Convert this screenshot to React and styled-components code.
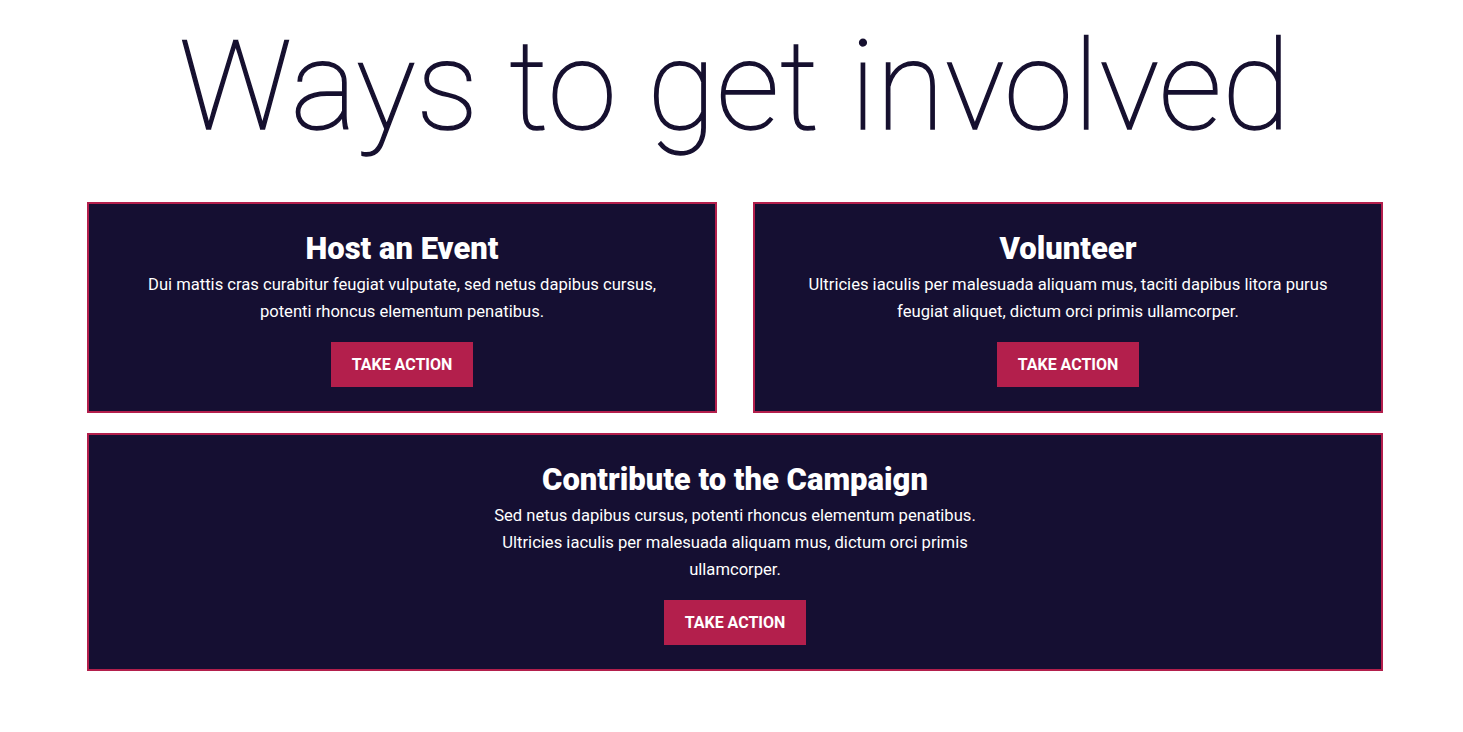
import React from 'react';
import styled, { createGlobalStyle } from 'styled-components';

const GlobalStyle = createGlobalStyle`
  body {
    margin: 0;
    background: #ffffff;
    font-family: Roboto, "Liberation Sans", sans-serif;
  }
`;

const Page = styled.main`
  padding: 12px 80px 40px 87px;
`;

const Heading = styled.h1`
  margin: 0 0 40px;
  font-size: 125px;
  font-weight: 100;
  line-height: 150px;
  letter-spacing: 0.4px;
  -webkit-text-stroke: 1.4px #16102f;
  color: #16102f;
  text-align: center;
`;

const Grid = styled.div`
  display: grid;
  grid-template-columns: 1fr 1fr;
  column-gap: 36px;
  row-gap: 20px;
`;

const Card = styled.section`
  grid-column: ${(p) => (p.$wide ? '1 / -1' : 'auto')};
  background: #150f32;
  border: 2px solid #b31f4c;
  padding: 27px 40px 24px;
  display: flex;
  flex-direction: column;
  align-items: center;
  text-align: center;
  color: #ffffff;
`;

const CardTitle = styled.h2`
  margin: 0 0 4px;
  font-size: 31px;
  font-weight: 900;
  line-height: 36px;
`;

const CardText = styled.p`
  margin: 0 0 17px;
  max-width: 530px;
  font-size: 16.6px;
  font-weight: 400;
  line-height: 27px;
`;

const ActionButton = styled.a`
  display: inline-flex;
  align-items: center;
  justify-content: center;
  height: 45px;
  padding: 0 21px;
  background: #b31f4c;
  color: #ffffff;
  font-size: 16px;
  font-weight: 700;
  text-transform: uppercase;
  text-decoration: none;
  cursor: pointer;
`;

const ways = [
  {
    title: 'Host an Event',
    text: 'Dui mattis cras curabitur feugiat vulputate, sed netus dapibus cursus, potenti rhoncus elementum penatibus.',
  },
  {
    title: 'Volunteer',
    text: 'Ultricies iaculis per malesuada aliquam mus, taciti dapibus litora purus feugiat aliquet, dictum orci primis ullamcorper.',
  },
  {
    title: 'Contribute to the Campaign',
    text: 'Sed netus dapibus cursus, potenti rhoncus elementum penatibus. Ultricies iaculis per malesuada aliquam mus, dictum orci primis ullamcorper.',
    wide: true,
  },
];

export default function App() {
  return (
    <>
      <GlobalStyle />
      <Page>
        <Heading>Ways to get involved</Heading>
        <Grid>
          {ways.map((way) => (
            <Card key={way.title} $wide={way.wide}>
              <CardTitle>{way.title}</CardTitle>
              <CardText>{way.text}</CardText>
              <ActionButton>Take Action</ActionButton>
            </Card>
          ))}
        </Grid>
      </Page>
    </>
  );
}
